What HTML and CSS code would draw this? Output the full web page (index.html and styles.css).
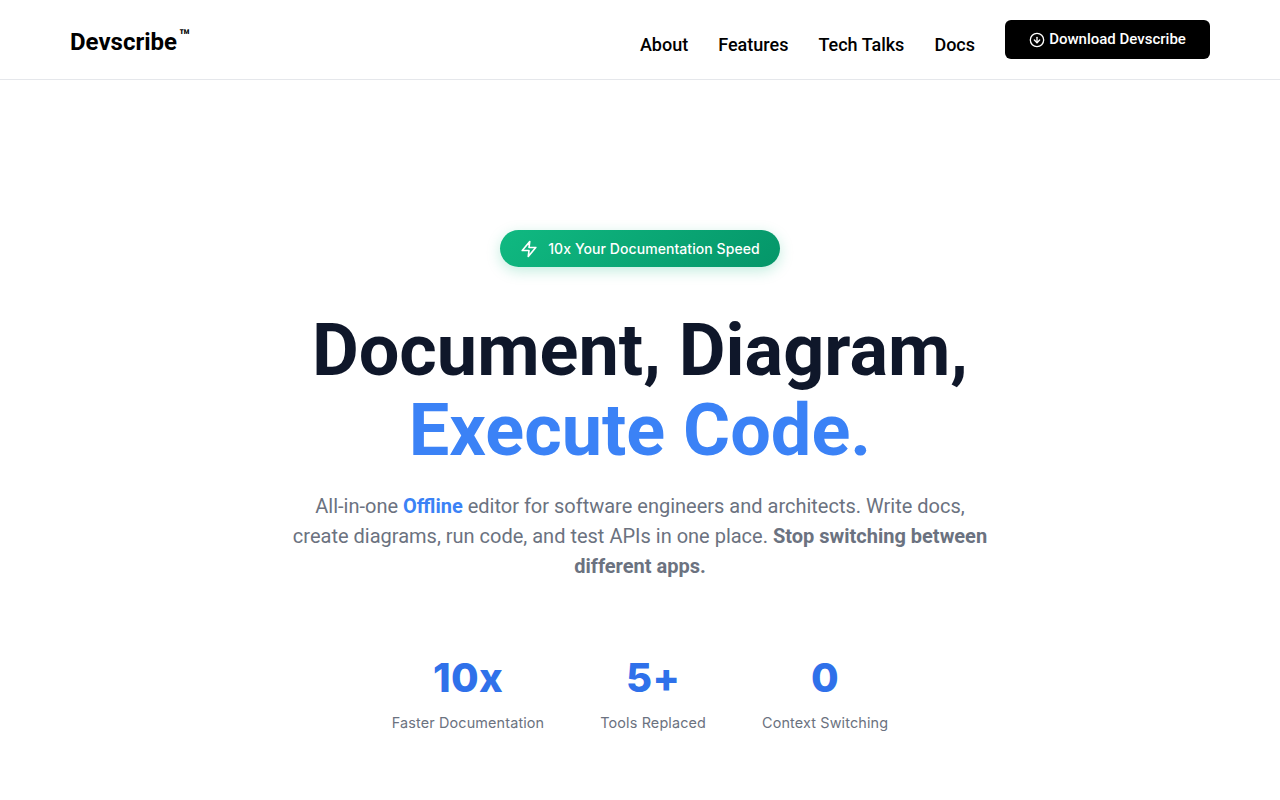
FILE: index.html
```html
<!DOCTYPE html>
<html>
<head>
  <title>Devscribe</title>
  <link rel="stylesheet" href="styles.css">
</head>
<body>

<!-- Top navigation -->
<header class="navbar">
  <a class="logo" href="#">Devscribe<sup class="tm">™</sup></a>
  <nav class="nav-links">
    <a class="nav-link" href="#">About</a>
    <a class="nav-link" href="#">Features</a>
    <a class="nav-link" href="#">Tech Talks</a>
    <a class="nav-link" href="#">Docs</a>
    <a class="download-btn" href="#">
      <svg class="download-icon" viewBox="0 0 24 24" fill="none" stroke="currentColor" stroke-width="2" stroke-linecap="round" stroke-linejoin="round">
        <circle cx="12" cy="12" r="10"></circle>
        <path d="M12 8v8"></path>
        <path d="M8 12l4 4 4-4"></path>
      </svg>
      <span class="download-text">Download Devscribe</span>
    </a>
  </nav>
</header>

<!-- Hero -->
<main class="hero">
  <div class="badge">
    <svg class="badge-icon" viewBox="0 0 24 24" fill="none" stroke="currentColor" stroke-width="2.2" stroke-linecap="round" stroke-linejoin="round">
      <path d="M13 2L3 14h9l-1 8 10-12h-9l1-8z"></path>
    </svg>
    10x Your Documentation Speed
  </div>

  <h1 class="title">Document, Diagram,<br><span class="title-accent">Execute Code.</span></h1>

  <p class="subtitle">All-in-one <strong class="offline">Offline</strong> editor for software engineers and architects. Write docs, create diagrams, run code, and test APIs in one place. <strong>Stop switching between different apps.</strong></p>

  <div class="stats">
    <div class="stat">
      <div class="stat-value">10x</div>
      <div class="stat-label">Faster Documentation</div>
    </div>
    <div class="stat">
      <div class="stat-value">5+</div>
      <div class="stat-label">Tools Replaced</div>
    </div>
    <div class="stat">
      <div class="stat-value">0</div>
      <div class="stat-label">Context Switching</div>
    </div>
  </div>
</main>

</body>
</html>
```

FILE: styles.css
```css
body {
  margin: 0;
  font-family: "Roboto", sans-serif;
  background: #fff;
  color: #000;
}

a {
  text-decoration: none;
  color: inherit;
}

.navbar {
  display: flex;
  justify-content: space-between;
  align-items: flex-start;
  height: 79px;
  padding: 0 70px;
  border-bottom: 1px solid #e5e7eb;
}

.logo {
  margin-top: 28px;
  font-size: 24px;
  line-height: 28px;
  font-weight: 700;
  color: #000;
}

.tm {
  margin-left: 2px;
  font-size: 18px;
  line-height: 0;
  vertical-align: 8px;
}

.nav-links {
  display: flex;
  align-items: flex-start;
  gap: 30px;
  padding-top: 20px;
}

.nav-link {
  margin-top: 14px;
  font-size: 18px;
  line-height: 21px;
  font-weight: 500;
}

.download-btn {
  display: flex;
  align-items: center;
  justify-content: center;
  gap: 4px;
  width: 205px;
  height: 39px;
  background: #000;
  color: #fff;
  border-radius: 6px;
  font-size: 15px;
  font-weight: 500;
}

.download-text {
  margin-bottom: 2px;
}

.download-icon {
  width: 16px;
  height: 16px;
}

.hero {
  display: flex;
  flex-direction: column;
  align-items: center;
  padding-top: 150px;
  text-align: center;
}

.badge {
  display: flex;
  align-items: center;
  justify-content: center;
  gap: 10px;
  width: 280px;
  height: 37px;
  border-radius: 999px;
  background: linear-gradient(135deg, #10b981, #059669);
  box-shadow: 0 4px 14px rgba(16, 185, 129, 0.25);
  color: #fff;
  font-family: "Inter", sans-serif;
  font-size: 14px;
  font-weight: 500;
  letter-spacing: 0.07px;
}

.badge-icon {
  width: 18px;
  height: 18px;
}

.title {
  margin: 44px 0 0;
  font-size: 72px;
  line-height: 80px;
  font-weight: 700;
  color: #0f172a;
}

.title-accent {
  color: #3b82f6;
}

.subtitle {
  width: 700px;
  margin: 20px 0 0;
  font-size: 20px;
  line-height: 30px;
  color: #6b7280;
}

.offline {
  color: #3b82f6;
}

.stats {
  display: flex;
  justify-content: center;
  gap: 56px;
  margin-top: 73px;
  font-family: "Inter", sans-serif;
}

.stat-value {
  font-size: 40px;
  line-height: 48px;
  font-weight: 800;
  letter-spacing: 0.3px;
  color: #2f71ea;
}

.stat-label {
  margin-top: 11px;
  font-size: 14.4px;
  line-height: 20px;
  letter-spacing: 0.14px;
  color: #6b7280;
}
```
